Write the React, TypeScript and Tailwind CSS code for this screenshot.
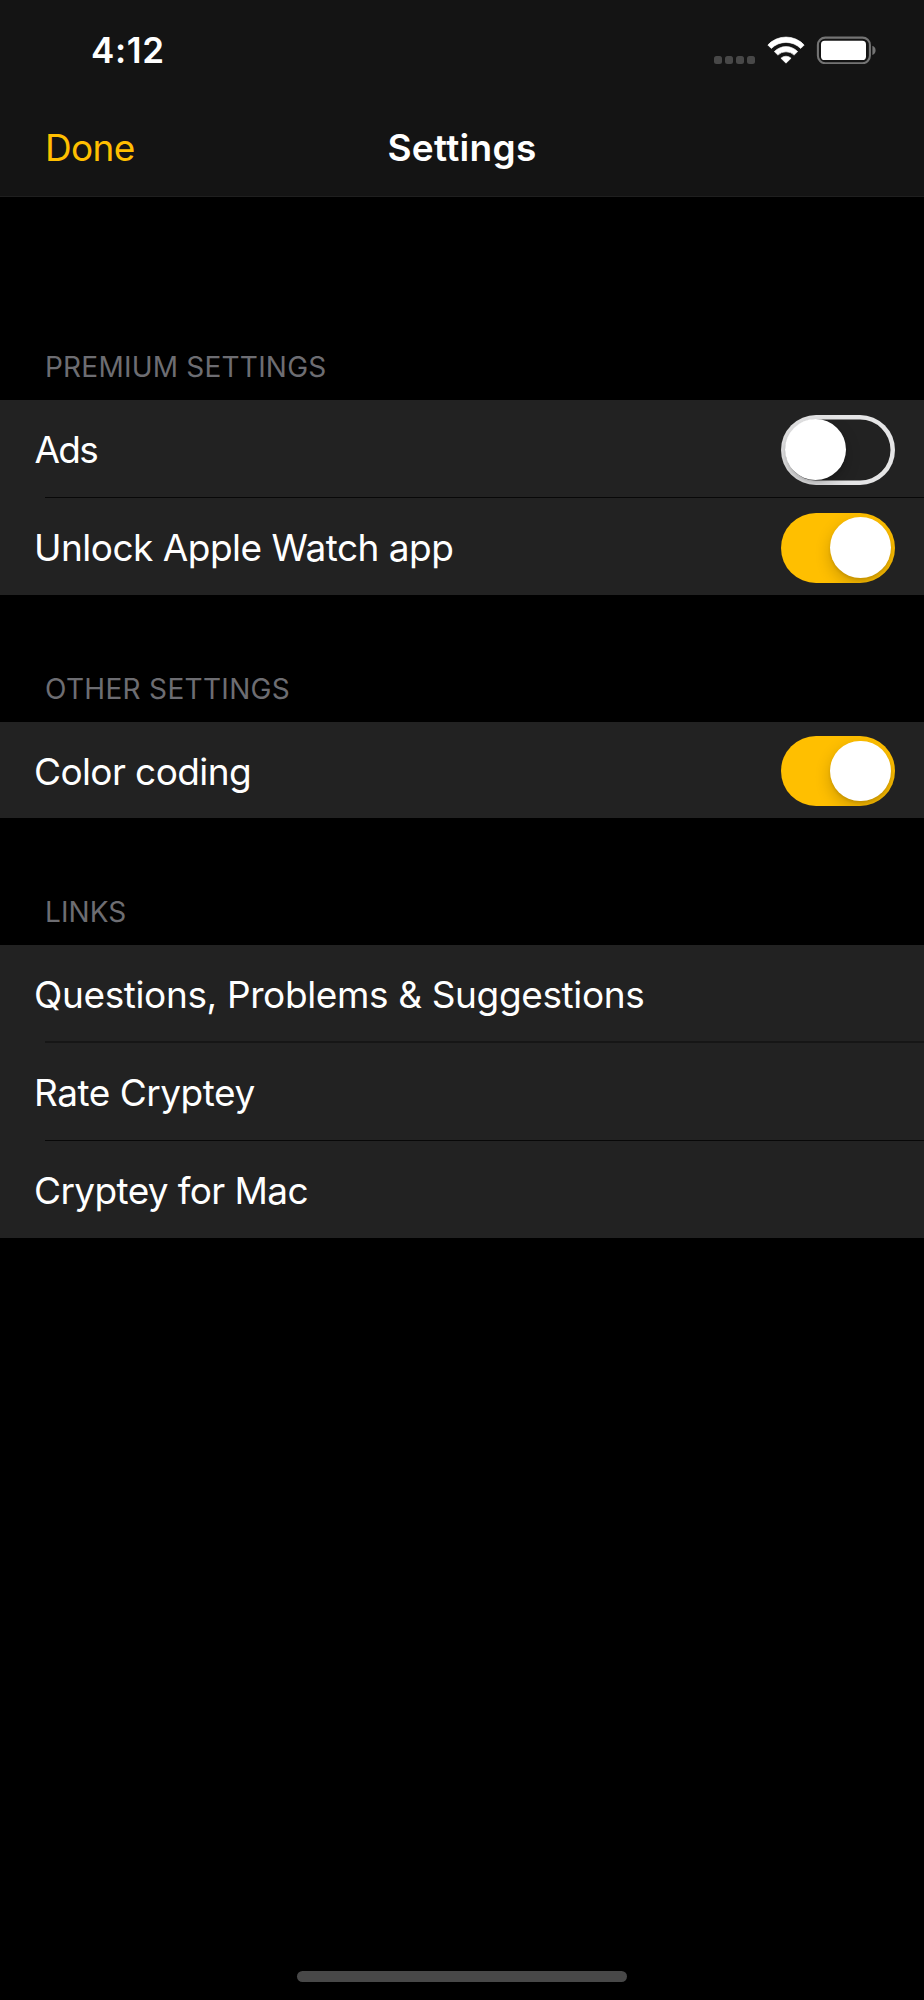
import { useState } from "react";
import clsx from "clsx";

interface ToggleProps {
  label: string;
  checked: boolean;
  onChange: (checked: boolean) => void;
}

const Toggle: React.FC<ToggleProps> = ({ label, checked, onChange }) => (
  <button
    type="button"
    role="switch"
    aria-label={label}
    aria-checked={checked}
    onClick={() => onChange(!checked)}
    className={clsx(
      "mt-0.5 flex h-[70px] w-[114px] items-center overflow-hidden rounded-full pr-[4.5px] pl-1",
      checked
        ? "justify-end bg-[#ffbf00]"
        : "justify-start shadow-[inset_0_0_0_4.5px_#e5e5e6]"
    )}
  >
    <span className="size-[60.5px] rounded-full bg-white shadow-[0_6px_16px_rgba(0,0,0,0.2),0_2px_3px_rgba(0,0,0,0.1)]" />
  </button>
);

const StatusIcons = () => (
  <div className="flex items-start">
    <div className="mt-5 flex gap-[3px]">
      <span className="size-2 rounded-[2.5px] bg-[#484848]" />
      <span className="size-2 rounded-[2.5px] bg-[#484848]" />
      <span className="size-2 rounded-[2.5px] bg-[#484848]" />
      <span className="size-2 rounded-[2.5px] bg-[#484848]" />
    </div>
    <svg width="38" height="28" viewBox="0 0 38 28" fill="white" className="ml-3">
      <path
        stroke="white"
        strokeWidth="0.6"
        strokeLinejoin="round"
        d="M0.8 9A24.8 24.8 0 0 1 37.2 9L33.7 12.5A20.8 20.8 0 0 0 4.3 12.5Z"
      />
      <path
        stroke="white"
        strokeWidth="0.6"
        strokeLinejoin="round"
        d="M7.3 15.6A16.2 16.2 0 0 1 30.7 15.6L27.1 19.1A11.6 11.6 0 0 0 10.9 19.1Z"
      />
      <path
        stroke="white"
        strokeWidth="0.6"
        strokeLinejoin="round"
        d="M13.9 22.2A7.5 7.5 0 0 1 24.1 22.2L19 27.2Z"
      />
    </svg>
    <svg width="60" height="28" viewBox="0 0 60 28" fill="none" className="ml-[11px]">
      <rect x="1.9" y="1.6" width="52" height="25.6" rx="7.4" stroke="#747474" strokeWidth="2.1" />
      <rect x="5" y="4.8" width="45" height="19.2" rx="3.6" fill="white" />
      <path d="M56.4 9.8C58.4 10.6 59.6 12.3 59.6 14.4S58.4 18.2 56.4 19Z" fill="#747474" />
    </svg>
  </div>
);

const SectionTitle: React.FC<{ className: string; children: string }> = ({
  className,
  children,
}) => (
  <h2
    className={clsx(
      "flex items-end pb-4 pl-[45px] text-[28px] leading-[34px] text-[#6d6d72]",
      className
    )}
  >
    {children}
  </h2>
);

interface RowProps {
  label: string;
  className: string;
  children?: React.ReactNode;
}

const Row: React.FC<RowProps> = ({ label, className, children }) => (
  <li className={clsx("flex items-center justify-between pr-[29px]", className)}>
    <span className="pt-[3px] text-[37px] leading-[44px] text-white">{label}</span>
    {children}
  </li>
);

export default function App() {
  const [ads, setAds] = useState(false);
  const [watchApp, setWatchApp] = useState(true);
  const [colorCoding, setColorCoding] = useState(true);

  return (
    <div className="flex h-[2000px] w-[924px] flex-col bg-black font-['Inter',sans-serif]">
      <header className="h-[197px] border-b border-[#1f1f1f] bg-[#141414]">
        <div className="flex h-[100px] items-start justify-between pl-[91px] pr-12">
          <span className="mt-[30px] text-[35px] leading-10 font-semibold tracking-[0.7px] text-white">
            4:12
          </span>
          <div className="mt-9">
            <StatusIcons />
          </div>
        </div>
        <nav className="grid grid-cols-3 pt-[26px] text-[37px] leading-[44px]">
          <button
            type="button"
            className="pl-[45px] text-left tracking-[-0.7px] text-[#ffbf00]"
          >
            Done
          </button>
          <h1 className="text-center font-semibold tracking-[0.3px] text-white">
            Settings
          </h1>
        </nav>
      </header>

      <main className="flex-1">
        <SectionTitle className="h-[203px] tracking-[0.22px]">PREMIUM SETTINGS</SectionTitle>
        <ul className="bg-[#222222]">
          <Row label="Ads" className="h-[97px] pl-[34.5px] tracking-[-1.7px]">
            <Toggle label="Ads" checked={ads} onChange={setAds} />
          </Row>
          <li className="ml-[45px] h-px bg-[#080808]" />
          <Row label="Unlock Apple Watch app" className="h-[97px] pl-[34px] tracking-[-0.52px]">
            <Toggle label="Unlock Apple Watch app" checked={watchApp} onChange={setWatchApp} />
          </Row>
        </ul>

        <SectionTitle className="h-[127px] tracking-[0.32px]">OTHER SETTINGS</SectionTitle>
        <ul className="bg-[#222222]">
          <Row label="Color coding" className="h-24 pl-[34px] tracking-[-0.6px]">
            <Toggle label="Color coding" checked={colorCoding} onChange={setColorCoding} />
          </Row>
        </ul>

        <SectionTitle className="h-[127px] tracking-[0.08px]">LINKS</SectionTitle>
        <ul className="bg-[#222222]">
          <Row
            label="Questions, Problems & Suggestions"
            className="h-24 pl-[34px] tracking-[-0.37px]"
          />
          <li className="ml-[45px] h-0.5 bg-[#161616]" />
          <Row label="Rate Cryptey" className="h-[97px] pl-[34px] tracking-[-0.48px]" />
          <li className="ml-[45px] h-px bg-[#080808]" />
          <Row label="Cryptey for Mac" className="h-[97px] pl-[34px] tracking-[-0.62px]" />
        </ul>
      </main>

      {/* home indicator */}
      <div className="mb-[18px] ml-[297px] h-[11px] w-[330px] rounded-full bg-[#484848]" />
    </div>
  );
}
